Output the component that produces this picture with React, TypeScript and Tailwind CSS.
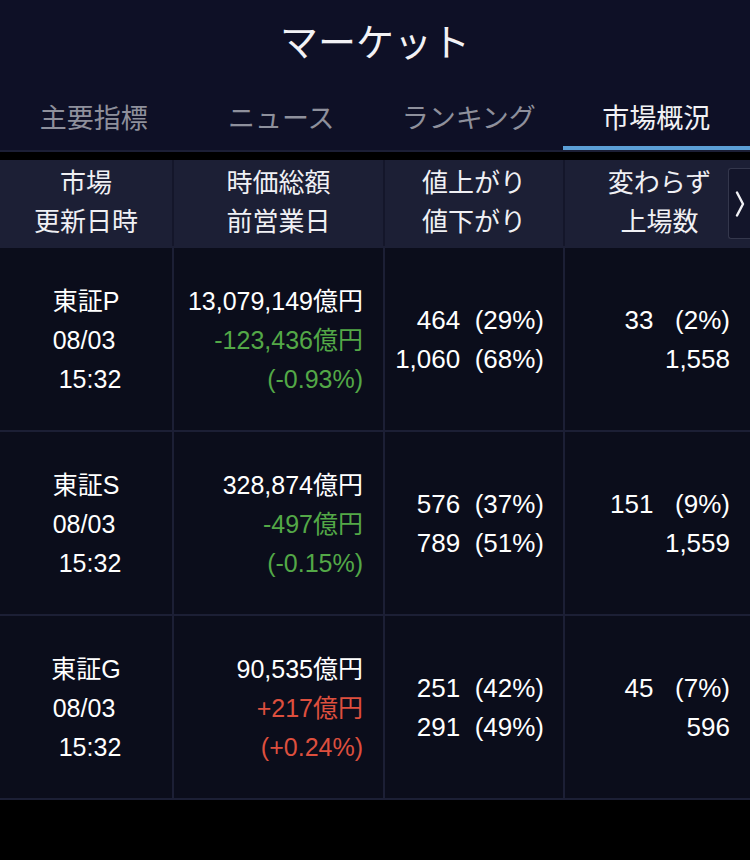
import { FC } from "react";

type Row = {
  market: string;
  date: string;
  time: string;
  cap: string;
  diff: string;
  pct: string;
  up: boolean;
  rise: string;
  fall: string;
  flat: string;
  listed: string;
};

const rows: Row[] = [
  {
    market: "東証P",
    date: "08/03",
    time: "15:32",
    cap: "13,079,149億円",
    diff: "-123,436億円",
    pct: "(-0.93%)",
    up: false,
    rise: "464  (29%)",
    fall: "1,060  (68%)",
    flat: "33   (2%)",
    listed: "1,558",
  },
  {
    market: "東証S",
    date: "08/03",
    time: "15:32",
    cap: "328,874億円",
    diff: "-497億円",
    pct: "(-0.15%)",
    up: false,
    rise: "576  (37%)",
    fall: "789  (51%)",
    flat: "151   (9%)",
    listed: "1,559",
  },
  {
    market: "東証G",
    date: "08/03",
    time: "15:32",
    cap: "90,535億円",
    diff: "+217億円",
    pct: "(+0.24%)",
    up: true,
    rise: "251  (42%)",
    fall: "291  (49%)",
    flat: "45   (7%)",
    listed: "596",
  },
];

const tabs = ["主要指標", "ニュース", "ランキング", "市場概況"];

const cols = "grid grid-cols-[174px_211px_180px_185px]";

const App: FC = () => {
  return (
    <div
      className="w-[750px] h-[860px] bg-black text-white overflow-hidden"
      style={{ fontFamily: '"Liberation Sans", "Noto Sans CJK JP", sans-serif' }}
    >
      <div className="bg-[#0e1026]">
        <div className="h-[86px] flex items-center justify-center text-[38px] text-[#f2f2f5]">
          マーケット
        </div>
        <div className="grid grid-cols-4 h-[66px] border-b-2 border-[#1c1f36]">
          {tabs.map((t, i) => (
            <div
              key={t}
              className={`flex items-center justify-center text-[27px] pt-[6px] ${
                i === 3
                  ? "text-[#f2f2f5] border-b-4 border-[#5b9fd6]"
                  : "text-[#8e909c] border-b-4 border-transparent"
              }`}
            >
              {t}
            </div>
          ))}
        </div>
      </div>

      <div className="h-[8px] bg-black" />

      <div className={`${cols} h-[86px] bg-[#1c1f35] text-[26px] leading-[39px] text-[#f0f0f4] relative`}>
        <div className="flex flex-col items-center justify-center border-r-2 border-[#14162a]">
          <span>市場</span>
          <span>更新日時</span>
        </div>
        <div className="flex flex-col items-center justify-center border-r-2 border-[#14162a]">
          <span>時価総額</span>
          <span>前営業日</span>
        </div>
        <div className="flex flex-col items-center justify-center border-r-2 border-[#14162a]">
          <span>値上がり</span>
          <span>値下がり</span>
        </div>
        <div className="flex flex-col items-center justify-center pl-[4px]">
          <span>変わらず</span>
          <span>上場数</span>
        </div>
        <div className="absolute right-0 top-[8px] w-[22px] h-[71px] bg-[#13152a] border border-[#34374c] border-r-0 rounded-l-[3px] flex items-center justify-center">
          <svg width="10" height="26" viewBox="0 0 10 26" fill="none">
            <polyline points="2,1.5 8,13 2,24.5" stroke="#f0f0f4" strokeWidth="2.4" strokeLinejoin="round" strokeLinecap="round" />
          </svg>
        </div>
      </div>

      {rows.map((r) => (
        <div
          key={r.market}
          className={`${cols} h-[184px] bg-[#0b0d1b] border-t-2 border-[#1c1f35] text-[25px] leading-[39px]`}
        >
          <div className="flex flex-col items-center justify-center border-r-2 border-[#1c1f35] pt-[2px]">
            <span>{r.market}</span>
            <span className="pr-[4px]">{r.date}</span>
            <span className="pl-[8px]">{r.time}</span>
          </div>
          <div className="flex flex-col items-end justify-center border-r-2 border-[#1c1f35] pr-[20px] pt-[2px]">
            <span>{r.cap}</span>
            <span className={r.up ? "text-[#dd4f3e]" : "text-[#53a847]"}>{r.diff}</span>
            <span className={r.up ? "text-[#dd4f3e]" : "text-[#53a847]"}>{r.pct}</span>
          </div>
          <div className="flex flex-col items-end justify-center border-r-2 border-[#1c1f35] pr-[19px] whitespace-pre pt-[2px] text-[26px]">
            <span>{r.rise}</span>
            <span>{r.fall}</span>
          </div>
          <div className="flex flex-col items-end justify-center pr-[20px] whitespace-pre pt-[2px] text-[26px]">
            <span>{r.flat}</span>
            <span>{r.listed}</span>
          </div>
        </div>
      ))}
      <div className="border-t-2 border-[#1c1f35]" />
    </div>
  );
};

export default App;
